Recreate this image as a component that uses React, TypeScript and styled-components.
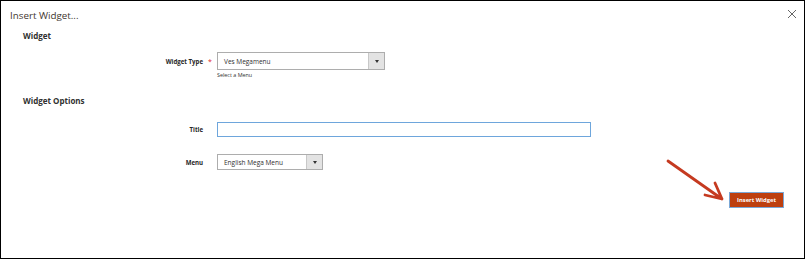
import styled, { createGlobalStyle } from 'styled-components';

const GlobalStyle = createGlobalStyle`
  html, body {
    margin: 0;
    padding: 0;
    background: #ffffff;
  }
  * {
    box-sizing: border-box;
  }
`;

const Modal = styled.div`
  position: relative;
  width: 805px;
  height: 259px;
  border: 1px solid #000;
  background: #fff;
  font-family: 'Open Sans', 'Noto Sans', sans-serif;
  color: #303030;
`;

const Header = styled.div`
  display: flex;
  justify-content: space-between;
  align-items: flex-start;
  height: 27px;
  padding: 7px 0 0 9px;
`;

const ModalTitle = styled.div`
  font-size: 9.8px;
  line-height: 16px;
  color: #41362f;
`;

const CloseButton = styled.div`
  display: flex;
  width: 10px;
  height: 10px;
  margin: 1px 7px 0 0;
  cursor: pointer;

  svg {
    display: block;
  }
`;

const SectionTitle = styled.div<{ $top: number }>`
  margin-top: ${(p) => p.$top}px;
  padding-left: 22px;
  font-size: 8px;
  font-weight: 700;
  line-height: 14px;
  color: #303030;
`;

const FieldRow = styled.div<{ $top: number }>`
  display: grid;
  grid-template-columns: 202px 14px 1fr;
  align-items: center;
  margin-top: ${(p) => p.$top}px;
`;

const Label = styled.div`
  text-align: right;
  font-size: 6.1px;
  font-weight: 700;
  color: #262626;
`;

const Required = styled.span`
  text-align: center;
  color: #e22626;
  font-size: 7px;
  line-height: 8px;
  padding-top: 2px;
`;

const FieldCol = styled.div`
  display: flex;
  flex-direction: column;
`;

const SelectBox = styled.div<{ $width: number; $height: number }>`
  display: flex;
  width: ${(p) => p.$width}px;
  height: ${(p) => p.$height}px;
  border: 1px solid #adadad;
  background: #fff;
`;

const SelectValue = styled.div`
  flex: 1;
  display: flex;
  align-items: center;
  padding-left: 6px;
  font-size: 6.5px;
  color: #303030;
`;

const SelectArrow = styled.div`
  width: 16px;
  display: flex;
  align-items: center;
  justify-content: center;
  background: #e3e3e3;
  border-left: 1px solid #c8c8c8;

  &::after {
    content: '';
    width: 0;
    height: 0;
    border-left: 2.5px solid transparent;
    border-right: 2.5px solid transparent;
    border-top: 3px solid #333;
  }
`;

const Note = styled.div`
  margin-top: 1px;
  font-size: 5.4px;
  line-height: 8px;
  color: #303030;
`;

const TextInput = styled.div`
  width: 374px;
  height: 15px;
  border: 1px solid #6ea6dc;
  background: #fff;
`;

const Footer = styled.div`
  display: flex;
  justify-content: flex-end;
  margin-top: 22px;
  padding-right: 20px;
`;

const PrimaryButton = styled.button`
  height: 16px;
  padding: 0 7px;
  background: #bd3f0f;
  border: 1px solid #7aa7d6;
  color: #fff;
  font-family: 'Open Sans', 'Noto Sans', sans-serif;
  font-size: 5.8px;
  font-weight: 700;
  line-height: 13px;
  cursor: pointer;
`;

const Annotation = styled.svg`
  position: absolute;
  left: 660px;
  top: 152px;
`;

const App = () => {
  return (
    <>
      <GlobalStyle />
      <Modal>
        <Header>
          <ModalTitle>Insert Widget...</ModalTitle>
          <CloseButton>
            <svg width="10" height="10" viewBox="0 0 10 10">
              <path d="M1 1 L9 9 M9 1 L1 9" stroke="#666" strokeWidth="1" fill="none" />
            </svg>
          </CloseButton>
        </Header>

        <SectionTitle $top={1}>Widget</SectionTitle>

        <FieldRow $top={9}>
          <Label>Widget Type</Label>
          <Required>*</Required>
          <SelectBox $width={168} $height={18}>
            <SelectValue>Ves Megamenu</SelectValue>
            <SelectArrow />
          </SelectBox>
        </FieldRow>
        <FieldRow $top={0}>
          <span />
          <span />
          <FieldCol>
            <Note>Select a Menu</Note>
          </FieldCol>
        </FieldRow>

        <SectionTitle $top={15}>Widget Options</SectionTitle>

        <FieldRow $top={14}>
          <Label>Title</Label>
          <span />
          <TextInput />
        </FieldRow>

        <FieldRow $top={17}>
          <Label>Menu</Label>
          <span />
          <SelectBox $width={106} $height={16}>
            <SelectValue>English Mega Menu</SelectValue>
            <SelectArrow />
          </SelectBox>
        </FieldRow>

        <Footer>
          <PrimaryButton>Insert Widget</PrimaryButton>
        </Footer>

        <Annotation width="70" height="52" viewBox="0 0 70 52">
          <path
            d="M7 8 L61 46 M61 46 L44 42 M61 46 L54 30"
            stroke="#c53a20"
            strokeWidth="2.8"
            strokeLinecap="round"
            strokeLinejoin="round"
            fill="none"
          />
        </Annotation>
      </Modal>
    </>
  );
};

export default App;
